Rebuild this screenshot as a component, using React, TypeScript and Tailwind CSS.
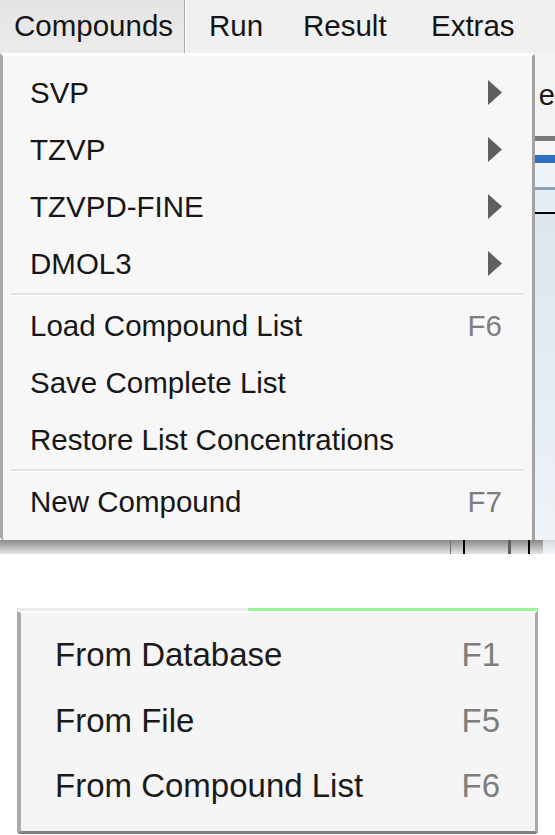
import React from "react";

type Item =
  | { kind: "item"; label: string; shortcut?: string; sub?: boolean }
  | { kind: "sep" };

const compoundItems: Item[] = [
  { kind: "item", label: "SVP", sub: true },
  { kind: "item", label: "TZVP", sub: true },
  { kind: "item", label: "TZVPD-FINE", sub: true },
  { kind: "item", label: "DMOL3", sub: true },
  { kind: "sep" },
  { kind: "item", label: "Load Compound List", shortcut: "F6" },
  { kind: "item", label: "Save Complete List" },
  { kind: "item", label: "Restore List Concentrations" },
  { kind: "sep" },
  { kind: "item", label: "New Compound", shortcut: "F7" },
];

const newItems = [
  { label: "From Database", shortcut: "F1" },
  { label: "From File", shortcut: "F5" },
  { label: "From Compound List", shortcut: "F6" },
];

function SubArrow() {
  return (
    <svg width="14" height="25" viewBox="0 0 14 25" className="block">
      <polygon points="0,0 14,12.5 0,25" fill="#5f5f5f" />
    </svg>
  );
}

function MenuBar() {
  return (
    <div className="flex h-[53px] items-center bg-[#f0f0f0] text-[29.5px] leading-none text-[#151515]">
      <div className="flex h-full w-[184px] items-center bg-gradient-to-b from-[#e4e4e4] to-[#ebebeb] pb-[2px] pl-[14px]">
        Compounds
      </div>
      <div className="h-full w-[1px] bg-[#a8a8a8]" />
      <div className="h-full w-[1px] bg-white" />
      <div className="flex h-full items-center pb-[2px] pl-[23px]">
        <span className="w-[94px]">Run</span>
        <span className="w-[128px]">Result</span>
        <span>Extras</span>
      </div>
    </div>
  );
}

function CompoundsMenu() {
  return (
    <div className="flex w-[543px] flex-col rounded-bl-[4px] rounded-tr-[4px] border-l-[3px] border-r-[3px] border-t-[3px] border-l-[#a9a9a9] border-r-[#a3a3a3] border-t-white bg-[#f7f7f7] pb-[10px] pt-[8px] text-[29.5px] leading-none text-[#161616]">
      {compoundItems.map((it, i) =>
        it.kind === "sep" ? (
          <div key={i} className="ml-[7px] mr-[8px] flex h-[5px] flex-col pt-[1px]">
            <div className="h-[2px] bg-[#e4e4e4]" />
            <div className="h-[1px] bg-white" />
          </div>
        ) : (
          <div key={i} className="flex h-[57px] items-center justify-between pl-[27px] pr-[30px]">
            <span>{it.label}</span>
            {it.sub ? <SubArrow /> : it.shortcut ? <span className="text-[#7d7d7d]">{it.shortcut}</span> : null}
          </div>
        )
      )}
    </div>
  );
}

function BehindStrip() {
  return (
    <div className="flex flex-1 flex-col">
      <div className="h-[83px] bg-[#f3f3f3] pl-[4px] pt-[28px] text-[29px] leading-[29px] text-[#1a1a1a]">e</div>
      <div className="h-[5px] bg-[#7a7a7a]" />
      <div className="h-[14px] bg-[#f7f7f7]" />
      <div className="h-[8px] bg-[#2d6fc2]" />
      <div className="h-[24px] bg-[#eef3f8]" />
      <div className="h-[3px] bg-[#8ea4b6]" />
      <div className="h-[22px] bg-[#e4edf5]" />
      <div className="h-[2px] bg-black" />
      <div className="flex-1 bg-gradient-to-b from-[#dbe6ef] to-[#eef3f7]" />
    </div>
  );
}

function MenuShadow() {
  return (
    <div className="flex h-[14px]">
      <div className="flex w-[543px] bg-gradient-to-b from-[#8a8a8a] to-[#e6e6e6]">
        <div className="w-[450px]" />
        <div className="w-[1px] bg-[#6e6e6e]" />
        <div className="w-[12px]" />
        <div className="w-[2px] bg-black" />
        <div className="w-[43px]" />
        <div className="w-[3px] bg-[#5e5e5e]" />
        <div className="w-[17px]" />
        <div className="w-[2px] bg-black" />
      </div>
      <div className="flex-1 bg-gradient-to-b from-[#d4dde4] to-[#f4f6f8]" />
    </div>
  );
}

function NewCompoundMenu() {
  return (
    <div className="ml-[17px] flex w-[521px] flex-col">
      <div className="flex h-[3px]">
        <div className="w-[231px] bg-[#ececec]" />
        <div className="flex-1 bg-[#99f59a]" />
      </div>
      <div className="flex flex-col rounded-b-[3px] border-b-[3px] border-l-[4px] border-r-[3px] border-t-[2px] border-b-[#818181] border-l-[#ababab] border-r-[#a9a9a9] border-t-white bg-[#f5f5f5] pb-[13px] pt-[9px] text-[33px] leading-none text-[#1a1a1a]">
        {newItems.map((it, i) => (
          <div key={i} className={`flex items-center justify-between pl-[34px] pr-[35px] ${i === 1 ? "h-[66px]" : "h-[65px]"}`}>
            <span>{it.label}</span>
            <span className="text-[#7d7d7d]">{it.shortcut}</span>
          </div>
        ))}
      </div>
    </div>
  );
}

export default function App() {
  return (
    <div className="h-[835px] w-[555px] overflow-hidden bg-white font-['Liberation_Sans',Arial,sans-serif]">
      <MenuBar />
      <div className="flex">
        <CompoundsMenu />
        <BehindStrip />
      </div>
      <MenuShadow />
      <div className="h-[54px]" />
      <NewCompoundMenu />
    </div>
  );
}
